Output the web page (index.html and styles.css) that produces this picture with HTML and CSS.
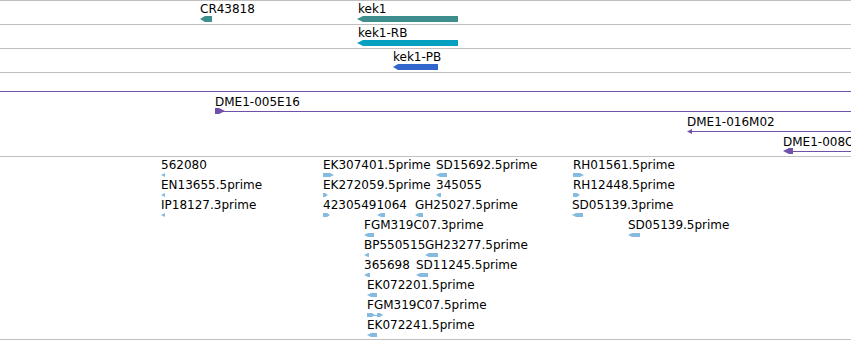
FILE: index.html
```html
<!DOCTYPE html>
<html lang="en">
<head>
  <meta charset="UTF-8">
  <title>Detail view</title>
  <link rel="stylesheet" href="styles.css">
</head>
<body>

  <div class="browser">

    <!-- gene models -->
    <div class="track">
      <svg class="lane" width="851" height="23" viewBox="0 1 851 23">
        <text class="label" x="200" y="13">CR43818</text>
        <polygon class="gene" points="200,19 205,16 212,16 212,22 205,22"/>
        <text class="label" x="358" y="13">kek1</text>
        <polygon class="gene" points="357,19 363,16 458,16 458,22 363,22"/>
      </svg>
    </div>
    <div class="track">
      <svg class="lane" width="851" height="23" viewBox="0 25 851 23">
        <text class="label" x="358" y="37">kek1-RB</text>
        <polygon class="mrna" points="357,43 363,40 458,40 458,46 363,46"/>
      </svg>
    </div>
    <div class="track">
      <svg class="lane" width="851" height="23" viewBox="0 49 851 23">
        <text class="label" x="393" y="61">kek1-PB</text>
        <polygon class="cds" points="393,67 398,64 438,64 438,70 398,70"/>
      </svg>
    </div>

    <div class="spacer"></div>

    <!-- BAC clones -->
    <div class="track">
      <svg class="lane" width="851" height="65" viewBox="0 91 851 65">
        <line class="clone-line" x1="0" y1="91.5" x2="851" y2="91.5"/>

        <text class="label" x="215" y="106">DME1-005E16</text>
        <polygon class="clone" points="215,108 219,108 225,111 219,114 215,114"/>
        <line class="clone-line" x1="222" y1="111.5" x2="851" y2="111.5"/>

        <text class="label" x="687" y="126">DME1-016M02</text>
        <polygon class="clone" points="687,131.5 692,129 692,134"/>
        <line class="clone-line" x1="690" y1="131.5" x2="851" y2="131.5"/>

        <text class="label" x="783" y="146">DME1-008O12</text>
        <polygon class="clone" points="783,151 789,148 793,148 793,154 789,154"/>
        <line class="clone-line" x1="792" y1="151.5" x2="851" y2="151.5"/>
      </svg>
    </div>

    <!-- ESTs -->
    <div class="track est-track">
      <svg class="lane" width="851" height="182" viewBox="0 157 851 182">
        <g>
          <text class="label" x="161" y="169">562080</text>
          <text class="label" x="323" y="169">EK307401.5prime</text>
          <text class="label" x="436" y="169">SD15692.5prime</text>
          <text class="label" x="573" y="169">RH01561.5prime</text>
          <polygon class="est" points="161,175 165,173 165,177"/>
          <polygon class="est" points="323,173 330,173 334,175 330,177 323,177"/>
          <polygon class="est" points="436,175 440,173 447,173 447,177 440,177"/>
          <polygon class="est" points="573,173 580,173 584,175 580,177 573,177"/>
        </g>
        <g>
          <text class="label" x="161" y="189">EN13655.5prime</text>
          <text class="label" x="323" y="189">EK272059.5prime</text>
          <text class="label" x="436" y="189">345055</text>
          <text class="label" x="573" y="189">RH12448.5prime</text>
          <polygon class="est" points="161,195 165,193 165,197"/>
          <polygon class="est" points="323,193 325,193 328,195 325,197 323,197"/>
          <polygon class="est" points="436,195 439,193 441,193 441,197 439,197"/>
          <polygon class="est" points="573,193 577,193 580,195 577,197 573,197"/>
        </g>
        <g>
          <text class="label" x="161" y="209">IP18127.3prime</text>
          <text class="label" x="323" y="209">42305491064</text>
          <text class="label" x="415" y="209">GH25027.5prime</text>
          <text class="label" x="572" y="209">SD05139.3prime</text>
          <polygon class="est" points="161,215 165,213 165,217"/>
          <polygon class="est" points="323,213 327,213 330,215 327,217 323,217"/>
          <polygon class="est" points="377,215 381,213 385,213 385,217 381,217"/>
          <polygon class="est" points="415,215 419,213 423,213 423,217 419,217"/>
          <polygon class="est" points="572,215 576,213 583,213 583,217 576,217"/>
        </g>
        <g>
          <text class="label" x="364" y="229">FGM319C07.3prime</text>
          <text class="label" x="628" y="229">SD05139.5prime</text>
          <polygon class="est" points="364,235 368,233 374,233 374,237 368,237"/>
          <polygon class="est" points="628,235 632,233 640,233 640,237 632,237"/>
        </g>
        <g>
          <text class="label" x="364" y="249">BP550515</text>
          <text class="label" x="425" y="249">GH23277.5prime</text>
          <polygon class="est" points="364,255 368,253 369,253 369,257 368,257"/>
          <polygon class="est" points="425,255 429,253 438,253 438,257 429,257"/>
        </g>
        <g>
          <text class="label" x="364" y="269">365698</text>
          <text class="label" x="416" y="269">SD11245.5prime</text>
          <polygon class="est" points="364,275 368,273 370,273 370,277 368,277"/>
          <polygon class="est" points="416,275 420,273 428,273 428,277 420,277"/>
        </g>
        <g>
          <text class="label" x="367" y="289">EK072201.5prime</text>
          <polygon class="est" points="367,295 371,293 377,293 377,297 371,297"/>
        </g>
        <g>
          <text class="label" x="367" y="309">FGM319C07.5prime</text>
          <polygon class="est" points="367,313 372,313 375,315 372,317 367,317"/>
          <line class="est-line" x1="374" y1="315.5" x2="378" y2="315.5"/>
          <polygon class="est" points="377,313 380,313 383,315 380,317 377,317"/>
        </g>
        <g>
          <text class="label" x="367" y="329">EK072241.5prime</text>
          <polygon class="est" points="367,335 371,333 377,333 377,337 371,337"/>
        </g>
      </svg>
    </div>

  </div>

</body>
</html>
```

FILE: styles.css
```css
body {
  margin: 0;
  background: #ffffff;
  overflow: hidden;
}
.browser {
  width: 851px;
  border-top: 1px solid #c0c0c0;
}
.track {
  border-bottom: 1px solid #c0c0c0;
}
.spacer {
  height: 18px;
}
.lane {
  display: block;
  overflow: hidden;
}
.label {
  font-family: "DejaVu Sans", sans-serif;
  font-size: 12px;
  fill: #000000;
}
.gene {
  fill: #3e8e8e;
}
.mrna {
  fill: #08a0c0;
}
.cds {
  fill: #3366cc;
}
.clone {
  fill: #7050a8;
}
.clone-line {
  stroke: #7050a8;
  stroke-width: 1;
}
.est {
  fill: #85bbe0;
}
.est-line {
  stroke: #85bbe0;
  stroke-width: 1;
}
```
